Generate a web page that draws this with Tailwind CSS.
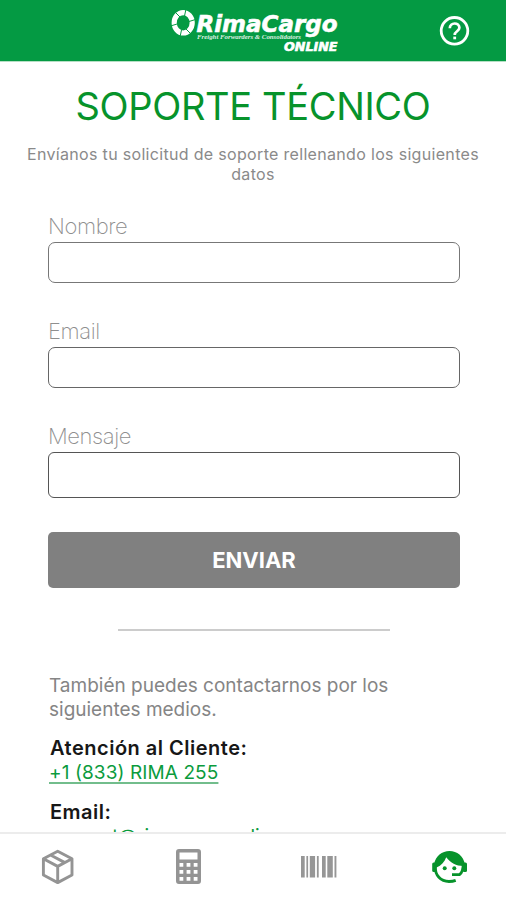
<!DOCTYPE html>
<html lang="es">
<head>
<meta charset="utf-8">
<meta name="viewport" content="width=device-width, initial-scale=1">
<title>Soporte técnico</title>
<script src="https://cdn.jsdelivr.net/npm/@tailwindcss/browser@4"></script>
</head>
<body class="bg-white">
<div class="flex h-[900px] w-[506px] flex-col overflow-hidden bg-white font-['Inter','Liberation_Sans',sans-serif]">
  <header class="flex h-[62px] shrink-0 justify-end border-b border-[#b5dfc4] bg-[#049a43]">
    <svg class="h-[61px] w-[346px]" viewBox="160 0 346 61" fill="#fff" role="img" aria-label="RimaCargo Online">
      <ellipse cx="183.200" cy="22.800" rx="9" ry="10.200" fill="none" stroke="#fff" stroke-width="5.200"/>
      <path d="M186 9l-1.500 7M195.500 19.500l-6.500 2M191 34l-5-5M180 37l1.500-7M170.500 26l6.500-2M175 12l5 5" stroke="#049a43" stroke-width="1"/>
      <g font-family="DejaVu Sans, sans-serif" font-weight="700" font-style="italic" stroke="#fff" stroke-width=".6">
        <text x="196.500" y="32" font-size="23.500" textLength="141" lengthAdjust="spacingAndGlyphs">RimaCargo</text>
        <text x="284" y="51" font-size="11.500" textLength="53.500" lengthAdjust="spacingAndGlyphs">ONLINE</text>
      </g>
      <text x="197" y="39.200" font-size="6.200" font-family="Liberation Serif, serif" font-weight="700" font-style="italic" textLength="104" lengthAdjust="spacingAndGlyphs" opacity=".85">Freight Forwarders &amp; Consolidators</text>
      <circle cx="454.500" cy="30.800" r="13.300" fill="none" stroke="#fff" stroke-width="2.800"/>
      <path d="M449.800 28.200c0-6.200 9.600-6.200 9.600-.4 0 3.400-4.700 3.600-4.700 7.100" fill="none" stroke="#fff" stroke-width="2.700"/>
      <rect x="453.300" y="36.600" width="2.800" height="2.700"/>
    </svg>
  </header>

  <main class="min-h-0 flex-1 overflow-hidden">
    <h1 class="mt-[20px] text-center text-[38px] leading-[48px] font-normal tracking-[-0.35px] text-[#07932b]">SOPORTE TÉCNICO</h1>
    <p class="mt-[14px] px-5 text-center text-[16px] leading-[20px] tracking-[0.32px] text-[#8a8a8a]">Envíanos tu solicitud de soporte rellenando los siguientes datos</p>
    <form class="ml-12 w-[412px]">
      <label class="mt-[28px] block h-[30px] text-[22px] leading-[29px] font-extralight tracking-[-0.4px] text-[#8f8f8f]">Nombre</label>
      <div class="h-[41px] rounded-[7px] border-[1.5px] border-[#777]"></div>
      <label class="mt-[34px] block h-[30px] text-[22px] leading-[29px] font-extralight tracking-[-0.4px] text-[#8f8f8f]">Email</label>
      <div class="h-[41px] rounded-[7px] border-[1.5px] border-[#666]"></div>
      <label class="mt-[34px] block h-[30px] text-[22px] leading-[29px] font-extralight tracking-[-0.4px] text-[#8f8f8f]">Mensaje</label>
      <div class="h-[46px] rounded-[6px] border-[1.5px] border-[#555]"></div>
      <button type="button" class="mt-[34px] block h-[56px] w-full rounded-[5px] bg-[#808080] text-[22px] font-bold text-white">ENVIAR</button>
    </form>
    <hr class="mt-[41px] ml-[118px] w-[272px] border-t-2 border-[#ccc]">
    <section class="mt-[43px] ml-[49px]">
      <p class="w-[370px] text-[19px] leading-[24px] text-[#858585]">También puedes contactarnos por los siguientes medios.</p>
      <h2 class="mt-[14px] ml-[1px] text-[20px] leading-[24px] font-semibold tracking-[0.5px] text-[#171717]">Atención al Cliente:</h2>
      <a class="block w-fit text-[19px] leading-[25px] tracking-[0.1px] text-[#0b9b3d] underline decoration-[#72bd8c] decoration-2 underline-offset-[3px]">+1 (833) RIMA 255</a>
      <h2 class="mt-[15px] ml-[1px] text-[20px] leading-[24px] font-semibold tracking-[0.5px] text-[#171717]">Email:</h2>
      <a class="block w-fit text-[19px] leading-[25px] text-[#0b9b3d] underline">support@rimacargoonline.com</a>
    </section>
  </main>

  <nav class="grid h-[68px] shrink-0 border-t-2 border-[#ececec] bg-white">
    <svg class="h-[66px] w-[506px]" viewBox="0 834 506 66" fill="none">
      <path d="M57.700 851.200l14.300 7.600v16.200l-14.300 7.600-14.300-7.600v-16.200zM43.400 858.800l14.300 7.600 14.300-7.600M57.700 866.400v16.200M50.500 855l14.400 7.600" stroke="#949494" stroke-width="2.900" stroke-linejoin="round"/>
      <path fill="#949494" fill-rule="evenodd" d="M179 849h19q3 0 3 3v29q0 3-3 3h-19q-3 0-3-3v-29q0-3 3-3zM179.500 852.500v7h18v-7zM179.500 863v3.800h3.800v-3.800zM186.600 863v3.800h3.800v-3.800zM193.700 863v3.800h3.800v-3.800zM179.500 870v3.800h3.800v-3.800zM186.600 870v3.800h3.800v-3.800zM193.700 870v3.800h3.800v-3.800zM179.500 877v3.800h3.800v-3.800zM186.600 877v3.800h3.800v-3.800zM193.700 877v3.800h3.800v-3.800z"/>
      <path fill="#969696" d="M301 856h3.700v21.500H301zM306.400 856h1.700v21.500h-1.700zM309.800 856h5.300v21.500h-5.300zM316.900 856h1.800v21.500h-1.800zM322 856h3.700v21.500H322zM327.300 856h5.500v21.500h-5.500zM334.500 856h1.900v21.500h-1.900z"/>
      <g fill="#07932b">
        <path d="M434 864.500C435.500 856 442 851 449.500 851s14 5 15.500 13.500v1.500c-8 .5-14-2.500-18.800-8.700-1.600 4.700-4.700 8.200-9.700 10.200z"/>
        <rect x="432.200" y="862.500" width="4" height="9.500" rx="1.500"/>
        <rect x="462.800" y="862.500" width="4.200" height="9.500" rx="1.500"/>
        <circle cx="444.700" cy="868.300" r="2"/><circle cx="454.300" cy="868.300" r="2"/>
      </g>
      <path d="M435.500 866c-1 9.500 5.500 15.500 13.500 15.500 2.500 0 4.600-.3 6.700-1.100M463.200 864c0 5-.7 8.500-3.700 10.700h-7.500" stroke="#07932b" stroke-width="2.800"/>
    </svg>
  </nav>
</div>
</body>
</html>
